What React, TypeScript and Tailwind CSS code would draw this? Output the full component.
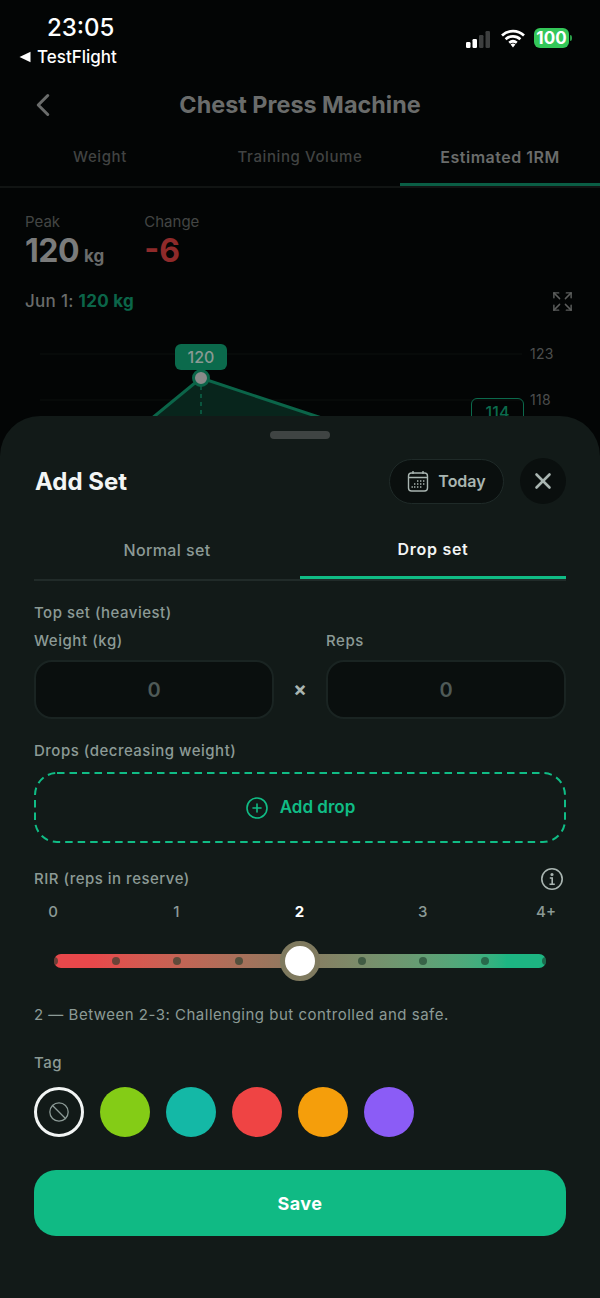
import React from 'react';
import { ChevronLeft, CirclePlus, Expand, Ban, X } from 'lucide-react';

const tagColors = ['bg-[#84cc16]', 'bg-[#14b8a6]', 'bg-[#ef4444]', 'bg-[#f59e0b]', 'bg-[#8b5cf6]'];
const rirLabels = ['0', '1', '2', '3', '4+'];
const ticks = [0, 1, 2, 3, 4, 5, 6, 7, 8];

const StatusBar = () => (
  <div className="flex h-[75px] justify-between">
    <div className="flex flex-col pl-[19px] pt-[13px] text-white">
      <div className="pl-[28px] text-[24px] font-medium leading-[30px]">23:05</div>
      <div className="mt-[2px] flex items-center gap-[6px] text-[17px] font-medium leading-[24px]">
        <svg width="12" height="12" viewBox="0 0 12 12">
          <path d="M11.5 0.8V11.2L0.5 6Z" fill="#fff" />
        </svg>
        <span>TestFlight</span>
      </div>
    </div>
    <div className="flex items-start pr-[28px] pt-[28px]">
      <svg width="26" height="20" viewBox="0 0 26 20" className="mt-[1px]">
        <rect x="1" y="13" width="4.5" height="6" rx="1.2" fill="#fff" />
        <rect x="7.5" y="10" width="4.5" height="9" rx="1.2" fill="#fff" />
        <rect x="14" y="6" width="4.5" height="13" rx="1.2" fill="#3d3f3f" />
        <rect x="20.5" y="2" width="4.5" height="17" rx="1.2" fill="#3d3f3f" />
      </svg>
      <svg width="26" height="20" viewBox="0 0 26 20" className="ml-[9px]">
        <path d="M2 7.5a16 16 0 0 1 22 0M5.6 11.2a11 11 0 0 1 14.8 0M9.2 14.8a6 6 0 0 1 7.6 0" fill="none" stroke="#fff" strokeWidth="2.7" />
        <path d="M10.6 16.6a3.6 3.6 0 0 1 4.8 0L13 19.4Z" fill="#fff" />
      </svg>
      <div className="ml-[8px] flex h-[20px] w-[35px] items-center justify-center rounded-[6px] bg-[#34c759] text-[17px] font-bold leading-none text-white">100</div>
      <div className="ml-[1px] mt-[7px] h-[6px] w-[2px] rounded-r-full bg-[#2a9c47]" />
    </div>
  </div>
);

const Background = () => (
  <div>
    <StatusBar />
    <div className="relative flex h-[60px] items-center justify-center">
      <ChevronLeft className="absolute left-[24px] top-[11px] text-[#6a6c6b]" size={38} strokeWidth={1.9} />
      <span className="text-[23.4px] font-bold text-[#6a6c6b]">Chest Press Machine</span>
    </div>
    <div className="flex h-[53px] border-b-2 border-[#111413]">
      <div className="flex flex-1 items-center justify-center pb-[6px] text-[15px] font-medium tracking-[0.6px] text-[#414342]">Weight</div>
      <div className="flex flex-1 items-center justify-center pb-[6px] text-[15px] font-medium tracking-[0.6px] text-[#414342]">Training Volume</div>
      <div className="flex flex-1 items-center justify-center border-b-[3px] border-[#0a5e45] pb-[4px] text-[16px] font-semibold tracking-[0.5px] text-[#6a6c6b]">Estimated 1RM</div>
    </div>
    <div className="flex gap-[40px] px-[25px] pt-[24px]">
      <div>
        <div className="text-[15px] leading-[20px] text-[#434544]">Peak</div>
        <div className="mt-[1px] flex items-baseline gap-[5px] leading-[36px]">
          <span className="text-[32px] font-bold tracking-[-0.5px] text-[#7a7b7b]">120</span>
          <span className="text-[17px] font-bold text-[#6a6c6b]">kg</span>
        </div>
      </div>
      <div>
        <div className="text-[15px] leading-[20px] text-[#434544]">Change</div>
        <div className="mt-[1px] text-[32px] font-bold leading-[36px] text-[#8f2a2a]">-6</div>
      </div>
    </div>
    <div className="flex items-center justify-between pl-[25px] pr-[26px] pt-[15px]">
      <div className="text-[17px] font-medium leading-[24px] tracking-[0.3px] text-[#6a6c6b]">
        Jun 1: <span className="font-bold text-[#0b6549]">120 kg</span>
      </div>
      <Expand className="text-[#5c5e5d]" size={23} strokeWidth={1.5} />
    </div>
    <div className="relative h-[120px]">
      <svg width="600" height="120" viewBox="0 0 600 120" className="absolute left-0 top-0">
        <path d="M40 41H522M40 87H522" stroke="#0d100f" strokeWidth="1" />
        <path d="M134 120L201 65L367 120Z" fill="#08251c" />
        <path d="M134 120L201 65L367 120" fill="none" stroke="#0b6549" strokeWidth="3" />
        <path d="M201 65V120" stroke="#0b6549" strokeWidth="1.5" strokeDasharray="4 4" />
        <circle cx="201" cy="65" r="7.5" fill="#8a8a8a" stroke="#0b6549" strokeWidth="3" />
      </svg>
      <div className="absolute left-[175px] top-[31px] flex h-[26px] w-[52px] items-center justify-center rounded-[6px] bg-[#0b6a4c] text-[16px] font-medium text-[#8a9a94]">120</div>
      <div className="absolute left-[530px] top-[31px] text-[14px] leading-[20px] tracking-[0.3px] text-[#4c4e4d]">123</div>
      <div className="absolute left-[530px] top-[77px] text-[14px] leading-[20px] tracking-[0.3px] text-[#4c4e4d]">118</div>
      <div className="absolute left-[471px] top-[85px] flex h-[30px] w-[53px] justify-center rounded-[6px] border-[1.5px] border-[#0b6a4c] pt-[1px] text-[16px] font-medium text-[#0b6a4c]">114</div>
    </div>
  </div>
);

const Sheet = () => (
  <div className="absolute inset-x-0 bottom-0 top-[416px] rounded-t-[40px] bg-[#121a18] px-[34px]">
    <div className="mx-auto mt-[15px] h-[8px] w-[60px] rounded-full bg-[#3f4443]" />

    <div className="mt-[19px] flex h-[46px] items-center justify-between">
      <h1 className="pl-[1px] pt-[1px] text-[24px] font-bold text-[#f2f5f4]">Add Set</h1>
      <div className="flex items-center gap-[16px]">
        <div className="flex h-[45px] w-[115px] items-center justify-center gap-[9px] rounded-full border border-[#1f2a28] bg-[#0a0f0e] text-[16px] font-semibold text-[#a9b5b1]">
          <svg width="22" height="22" viewBox="0 0 22 22" fill="none" stroke="#a9b5b1" strokeWidth="1.4">
            <rect x="1.5" y="3" width="19" height="18" rx="3" />
            <path d="M1.5 7.5H20.5M6 1V4M16 1V4" />
            <path d="M10 11h1.4M13 11h1.4M16 11h1.4M7 14h1.4M10 14h1.4M13 14h1.4M16 14h1.4M4.500 17h1.4M7 17h1.4M10 17h1.4M13 17h1.4" strokeWidth="1.5" />
          </svg>
          Today
        </div>
        <div className="flex h-[46px] w-[46px] items-center justify-center rounded-full bg-[#0a0f0e]">
          <X className="text-[#a9b5b1]" size={26} strokeWidth={2.4} />
        </div>
      </div>
    </div>

    <div className="mt-[16px] flex h-[61px] border-b-2 border-[#212b29]">
      <div className="flex flex-1 items-center justify-center text-[16px] font-medium tracking-[0.4px] text-[#8c9a96]">Normal set</div>
      <div className="flex flex-1 items-center justify-center border-b-[3px] border-[#10bc85] pt-[2px] text-[16px] font-semibold tracking-[0.7px] text-[#f2f5f4]">Drop set</div>
    </div>

    <div className="mt-[22px] text-[15px] font-medium leading-[20px] tracking-[0.5px] text-[#8c9a96]">Top set (heaviest)</div>
    <div className="mt-[8px] flex">
      <div className="w-[240px]">
        <div className="text-[15px] font-medium leading-[20px] tracking-[0.55px] text-[#8c9a96]">Weight (kg)</div>
        <div className="mt-[9px] flex h-[59px] items-center justify-center rounded-[18px] border-2 border-[#1a2422] bg-[#0a0f0e] text-[20px] font-semibold text-[#4f5a57]">0</div>
      </div>
      <div className="flex w-[52px] items-end justify-center pb-[15px] text-[20px] font-bold leading-[30px] text-[#a9b5b1]">×</div>
      <div className="w-[240px]">
        <div className="text-[15px] font-medium leading-[20px] tracking-[0.55px] text-[#8c9a96]">Reps</div>
        <div className="mt-[9px] flex h-[59px] items-center justify-center rounded-[18px] border-2 border-[#1a2422] bg-[#0a0f0e] text-[20px] font-semibold text-[#4f5a57]">0</div>
      </div>
    </div>

    <div className="mt-[22px] text-[15px] font-medium leading-[20px] tracking-[0.5px] text-[#8c9a96]">Drops (decreasing weight)</div>
    <div className="relative mt-[11px] flex h-[71px] items-center justify-center gap-[11px] text-[17px] font-semibold text-[#10bc85]">
      <svg width="532" height="71" viewBox="0 0 532 71" fill="none" className="absolute left-0 top-0">
        <rect x="1" y="1" width="530" height="69" rx="22" stroke="#10bc85" strokeWidth="2" strokeDasharray="7.5 5" />
      </svg>
      <CirclePlus size={24} strokeWidth={1.6} />
      Add drop
    </div>

    <div className="mt-[24px] flex h-[24px] items-center justify-between">
      <span className="pt-[1px] text-[15px] font-medium tracking-[0.5px] text-[#8c9a96]">RIR (reps in reserve)</span>
      <svg width="24" height="24" viewBox="0 0 24 24" fill="none" stroke="#a9b5b1" strokeWidth="1.6" className="mr-[2px]">
        <circle cx="12" cy="12" r="10.2" />
        <path d="M9.800 11H12.200V17M9.500 17.200H14.800" />
        <circle cx="12" cy="7.500" r="0.8" fill="#a9b5b1" />
      </svg>
    </div>

    <div className="mt-[11px] flex justify-between pl-[4px] pr-[5px] text-[15px] font-medium leading-[20px]">
      {rirLabels.map((label) => (
        <span key={label} className={`w-[30px] text-center ${label === '2' ? 'font-bold text-white' : 'text-[#8c9a96]'}`}>{label}</span>
      ))}
    </div>

    <div className="relative mt-[19px] flex h-[40px] items-center px-[20px]">
      <div className="h-[14px] w-full overflow-hidden rounded-full bg-gradient-to-r from-[#e8484b] from-[8%] via-[#8a7a60] to-[#1db582] to-[92%]">
        <div className="-mx-[4px] flex h-full items-center justify-between">
          {ticks.map((tick) => (
            <div key={tick} className="h-[8px] w-[8px] rounded-full bg-[#1a3a2a]/60" />
          ))}
        </div>
      </div>
      <div className="absolute left-[246px] top-0 h-[40px] w-[40px] rounded-full border-[5px] border-[#7f7a5f] bg-white" />
    </div>

    <div className="mt-[24px] text-[15px] leading-[20px] tracking-[0.5px] text-[#8c9a96]">2 — Between 2-3: Challenging but controlled and safe.</div>

    <div className="mt-[28px] text-[15px] font-medium leading-[20px] tracking-[0.5px] text-[#8c9a96]">Tag</div>
    <div className="mt-[14px] flex gap-[16px]">
      <div className="flex h-[50px] w-[50px] items-center justify-center rounded-full border-[3px] border-[#f2f5f4]">
        <Ban className="text-[#8c9a96]" size={22} strokeWidth={1.4} />
      </div>
      {tagColors.map((color) => (
        <div key={color} className={`h-[50px] w-[50px] rounded-full ${color}`} />
      ))}
    </div>

    <div className="mt-[33px] flex h-[66px] items-center justify-center rounded-[22px] bg-[#10ba84] text-[18px] font-bold tracking-[0.5px] text-white">Save</div>
  </div>
);

const App = (): React.JSX.Element => {
  return (
    <div className="relative h-[1298px] w-[600px] overflow-hidden bg-[#030505] font-['Inter',sans-serif]">
      <Background />
      <Sheet />
    </div>
  );
};

export default App;
